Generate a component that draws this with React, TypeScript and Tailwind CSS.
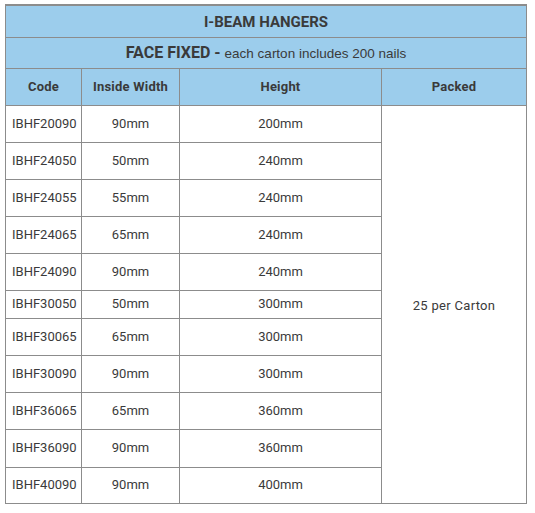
import React from "react";

const rows: [string, string, string, number][] = [
  ["IBHF20090", "90mm", "200mm", 37],
  ["IBHF24050", "50mm", "240mm", 37],
  ["IBHF24055", "55mm", "240mm", 37],
  ["IBHF24065", "65mm", "240mm", 37],
  ["IBHF24090", "90mm", "240mm", 37],
  ["IBHF30050", "50mm", "300mm", 28],
  ["IBHF30065", "65mm", "300mm", 37],
  ["IBHF30090", "90mm", "300mm", 37],
  ["IBHF36065", "65mm", "360mm", 37],
  ["IBHF36090", "90mm", "360mm", 38],
  ["IBHF40090", "90mm", "400mm", 36],
];

export default function App() {
  const font = { fontFamily: "Roboto, 'DejaVu Sans', sans-serif" };
  return (
    <div className="w-[535px] h-[513px] bg-white pt-[4px] pl-[5px]" style={font}>
      <table className="border-collapse w-[521px] text-[#3a3a3a] table-fixed">
        <colgroup>
          <col className="w-[76px]" />
          <col className="w-[98px]" />
          <col className="w-[202px]" />
          <col className="w-[145px]" />
        </colgroup>
        <tbody>
          <tr className="h-[32px] bg-[#9ccdec]">
            <td colSpan={4} className="border-[1.5px] border-[#8c8c8c] border-t-2 text-center font-bold text-[15px] pt-[1px]">
              I-BEAM HANGERS
            </td>
          </tr>
          <tr className="h-[31px] bg-[#9ccdec]">
            <td colSpan={4} className="border-[1.5px] border-[#8c8c8c] text-center">
              <span className="font-bold text-[16px]">FACE FIXED - </span>
              <span className="text-[13.5px]" style={{ fontFamily: "'Liberation Sans', Arial, sans-serif" }}>
                each carton includes 200 nails
              </span>
            </td>
          </tr>
          <tr className="h-[37px] bg-[#9ccdec] font-bold text-[13px] tracking-[0.2px]">
            <td className="border-[1.5px] border-[#8c8c8c] text-center">Code</td>
            <td className="border-[1.5px] border-[#8c8c8c] text-center">Inside Width</td>
            <td className="border-[1.5px] border-[#8c8c8c] text-center">Height</td>
            <td className="border-[1.5px] border-[#8c8c8c] text-center">Packed</td>
          </tr>
          {rows.map(([code, w, h, ht], i) => (
            <tr key={code} className="text-[13px]" style={{ height: ht }}>
              <td className="border-[1.5px] border-[#8c8c8c] pl-[6px] text-left">{code}</td>
              <td className="border-[1.5px] border-[#8c8c8c] text-center">{w}</td>
              <td className="border-[1.5px] border-[#8c8c8c] text-center">{h}</td>
              {i === 0 && (
                <td rowSpan={rows.length} className="border-[1.5px] border-[#8c8c8c] text-center pt-[3px] tracking-[0.3px]">
                  25 per Carton
                </td>
              )}
            </tr>
          ))}
        </tbody>
      </table>
    </div>
  );
}
